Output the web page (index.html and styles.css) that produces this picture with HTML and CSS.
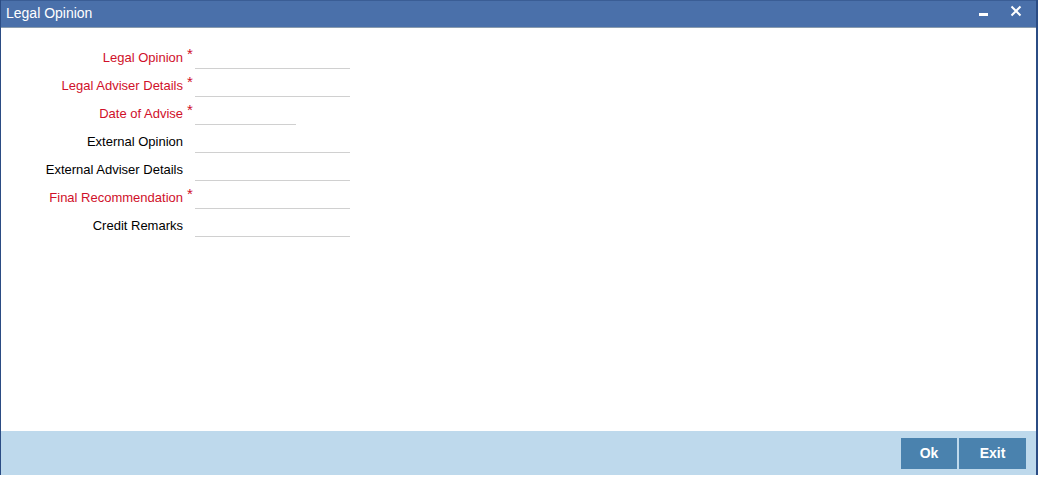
FILE: index.html
```html
<!DOCTYPE html>
<html lang="en">
<head>
    <meta charset="UTF-8">
    <title>Legal Opinion</title>
    <link rel="stylesheet" href="styles.css">
</head>
<body>
    <div class="window">
        <div class="titlebar">
            <span class="title">Legal Opinion</span>
            <div class="controls">
                <span class="min"></span>
                <svg class="close" viewBox="0 0 12 12" xmlns="http://www.w3.org/2000/svg">
                    <path d="M1.5 1.5L10.5 10.5M10.5 1.5L1.5 10.5" stroke="#fff" stroke-width="2"/>
                </svg>
            </div>
        </div>
        <div class="content">
            <div class="row">
                <label class="req">Legal Opinion</label><span class="star">*</span>
                <input type="text">
            </div>
            <div class="row">
                <label class="req">Legal Adviser Details</label><span class="star">*</span>
                <input type="text">
            </div>
            <div class="row">
                <label class="req">Date of Advise</label><span class="star">*</span>
                <input type="text" class="short">
            </div>
            <div class="row">
                <label>External Opinion</label><span class="star"></span>
                <input type="text">
            </div>
            <div class="row">
                <label>External Adviser Details</label><span class="star"></span>
                <input type="text">
            </div>
            <div class="row">
                <label class="req">Final Recommendation</label><span class="star">*</span>
                <input type="text">
            </div>
            <div class="row">
                <label>Credit Remarks</label><span class="star"></span>
                <input type="text">
            </div>
        </div>
        <div class="footer">
            <button class="btn ok">Ok</button>
            <button class="btn exit">Exit</button>
        </div>
    </div>
</body>
</html>
```

FILE: styles.css
```css
body {
    margin: 0;
    background: #fff;
    font-family: 'Liberation Sans', Arial, sans-serif;
    overflow: hidden;
}
.window {
    width: 1038px;
    height: 475px;
    box-sizing: border-box;
    border-left: 1px solid #2b4c84;
    border-right: 2px solid #2b4c84;
    display: flex;
    flex-direction: column;
}
.titlebar {
    height: 28px;
    background: #4a70aa;
    border-top: 1px solid #3a5d95;
    border-bottom: 1px solid #8a9cae;
    box-sizing: border-box;
    display: flex;
    align-items: center;
    justify-content: space-between;
    padding: 0 14px 2px 5px;
}
.title {
    color: #fff;
    font-size: 14px;
}
.controls {
    display: flex;
    align-items: center;
    gap: 22px;
}
.min {
    width: 9px;
    height: 3px;
    background: #fff;
    margin-top: 2px;
    margin-left: 4px;
}
.close {
    width: 12px;
    height: 12px;
    margin-top: -4px;
}
.content {
    flex: 1;
    padding-top: 14px;
}
.row {
    display: flex;
    align-items: flex-end;
    height: 28px;
}
.row label {
    width: 182px;
    text-align: right;
    font-size: 13px;
    color: #000;
    padding-bottom: 5px;
}
.row label.req {
    color: #d0102a;
}
.star {
    width: 12px;
    color: #d0102a;
    font-size: 15px;
    align-self: flex-start;
    padding: 3px 0 0 4px;
    box-sizing: border-box;
}
.row input {
    width: 155px;
    height: 26px;
    border: none;
    border-bottom: 1px solid #d0d0d0;
    outline: none;
    box-sizing: border-box;
    padding: 0;
    margin-bottom: 1px;
}
.row input.short {
    width: 101px;
}
.footer {
    height: 44px;
    background: #bed9ec;
    display: flex;
    align-items: center;
    justify-content: flex-end;
    padding-right: 10px;
    gap: 2px;
}
.btn {
    height: 31px;
    border: none;
    background: #4a82ae;
    color: #fff;
    font-family: 'Liberation Sans', Arial, sans-serif;
    font-weight: 700;
    font-size: 14px;
    cursor: pointer;
}
.btn.ok {
    width: 56px;
}
.btn.exit {
    width: 67px;
}
```
